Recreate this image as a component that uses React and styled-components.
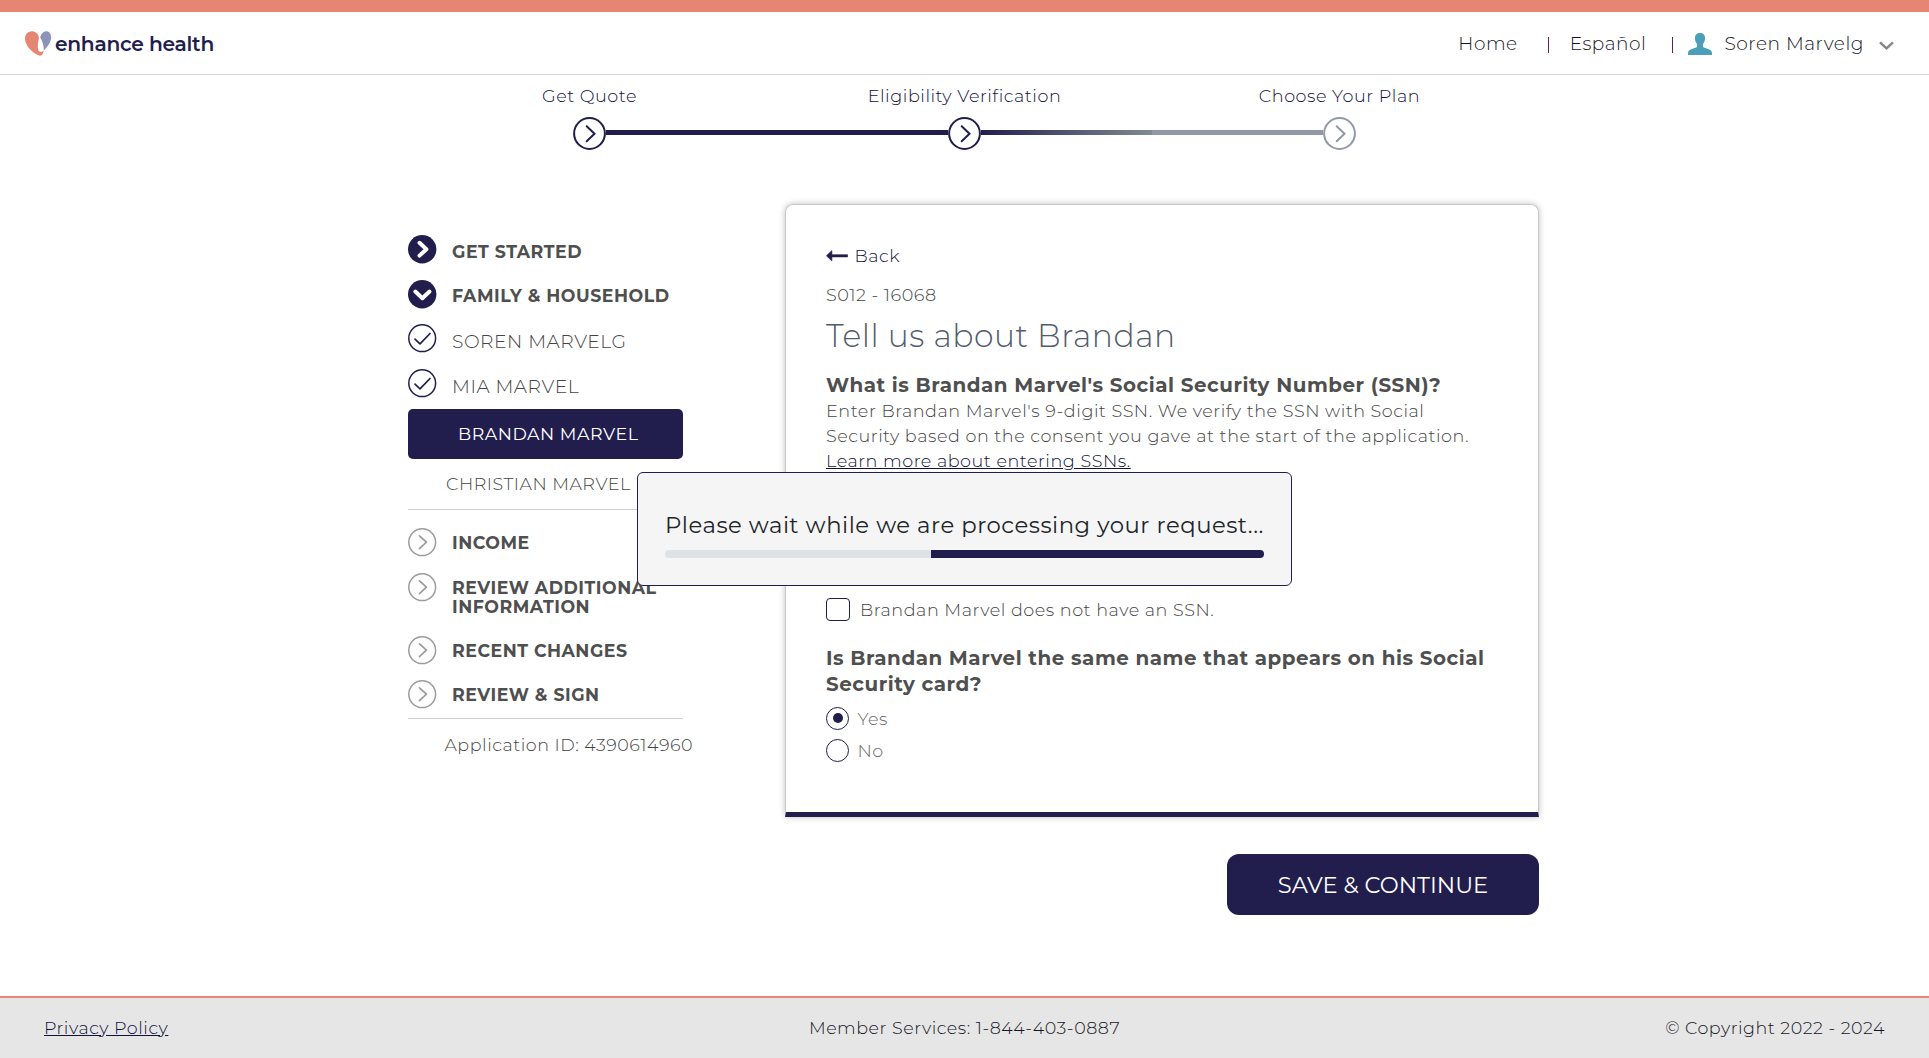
import React from 'react';
import styled, { createGlobalStyle } from 'styled-components';

const navy = '#211e4e';
const coral = '#e68672';

const GlobalStyle = createGlobalStyle`
  * { box-sizing: border-box; }
  body {
    margin: 0;
    background: #fff;
    color: #454545;
    font-family: Montserrat, Inter, sans-serif;
    font-size: 17.6px;
    font-weight: 300;
    letter-spacing: 0.528px;
  }
  a { color: inherit; text-decoration: none; }
  h1, p { margin: 0; }
`;

const Page = styled.div`
  display: flex;
  flex-direction: column;
  height: 1058px;
  overflow: hidden;
`;

const Header = styled.header`
  display: flex;
  justify-content: space-between;
  align-items: center;
  height: 75px;
  padding: 0 35px 0 25px;
  border-top: 12px solid ${coral};
  border-bottom: 1px solid #d6d6d6;
`;

const Logo = styled.div`
  display: flex;
  align-items: center;
  gap: 3px;
`;

const LogoName = styled.span`
  padding-top: 1px;
  color: ${navy};
  font-size: 20.2px;
  font-weight: 600;
  letter-spacing: -0.26px;
`;

const Nav = styled.nav`
  display: flex;
  align-items: center;
  color: #15151f;
  font-size: 18.5px;
`;

const Divider = styled.span`
  width: 1px;
  height: 16px;
  margin: 3px ${p => p.$right}px 0 ${p => p.$left}px;
  background: #5b2350;
`;

const UserName = styled.span`
  margin: 0 15px 0 12px;
  font-size: 18.6px;
`;

const Progress = styled.section`
  padding-top: 9px;
`;

const StepLabels = styled.div`
  display: grid;
  grid-template-columns: repeat(3, 375px);
  justify-content: center;
  color: #12103c;
  line-height: 24px;
  text-align: center;
`;

const Track = styled.div`
  display: flex;
  justify-content: center;
  align-items: center;
  margin-top: 9px;
  svg { display: block; }
`;

const Segment = styled.div`
  width: 342px;
  height: 5px;
  margin-bottom: 2px;
  background: ${p => (p.$partial
    ? `linear-gradient(90deg, ${navy}, #808b91) 0 0 / 50% 100% no-repeat #9099a5`
    : navy)};
`;

const Main = styled.main`
  display: flex;
  gap: 102px;
  padding: 54px 0 0 408px;
`;

const Sidebar = styled.aside`
  width: 275px;
  padding-top: 31px;
`;

const NavRow = styled.div`
  display: flex;
  gap: 15px;
  height: ${p => p.$height}px;
  svg { flex: none; display: block; }
`;

const NavLabel = styled.span`
  padding-top: ${p => p.$drop}px;
  line-height: 19px;
  color: ${p => (p.$person ? 'inherit' : '#4f4f4f')};
  font-size: ${p => (p.$person ? 18.7 : 17.35)}px;
  font-weight: ${p => (p.$person ? 300 : 700)};
`;

const ActivePerson = styled.div`
  height: 50px;
  padding-left: 50px;
  border-radius: 5px;
  background: ${navy};
  color: #fff;
  font-size: 17.4px;
  font-weight: 400;
  line-height: 50px;
`;

const NextPerson = styled.div`
  padding-left: 38px;
  font-size: 17.5px;
  line-height: 50px;
`;

const Rule = styled.div`
  height: 1px;
  margin-bottom: ${p => p.$gap}px;
  background: #cfcfcf;
`;

const ApplicationId = styled.p`
  padding-left: 36.5px;
  font-size: 17.5px;
  line-height: 24px;
  white-space: nowrap;
`;

const Column = styled.div`
  display: flex;
  flex-direction: column;
  align-items: flex-end;
`;

const Card = styled.section`
  width: 754px;
  height: 613px;
  padding: 39px 40px 0;
  border: 1px solid #c8c8c8;
  border-bottom: 5px solid ${navy};
  border-radius: 8px 8px 0 0;
  box-shadow: 0 0 6px rgba(0, 0, 0, 0.25);
`;

const BackLink = styled.a`
  display: flex;
  align-items: center;
  gap: 6.5px;
  color: #12103c;
  line-height: 24px;
`;

const ScreenCode = styled.p`
  margin-top: 15px;
  line-height: 24px;
`;

const Title = styled.h1`
  margin-top: 9px;
  color: #525b6b;
  font-size: 31.4px;
  font-weight: 300;
  line-height: 40px;
`;

const Question = styled.p`
  margin-top: ${p => p.$top}px;
  color: #4f4f4f;
  font-size: 19.88px;
  font-weight: 700;
  line-height: 26px;
`;

const Hint = styled.p`
  line-height: 25px;
  a {
    color: #12103c;
    text-decoration: underline;
  }
`;

const Choice = styled.label`
  display: flex;
  align-items: center;
  gap: ${p => p.$gap}px;
  height: 23px;
  margin-top: ${p => p.$top}px;
  color: ${p => p.$color || 'inherit'};
`;

const CheckBox = styled.span`
  width: 24px;
  height: 23px;
  border: 1px solid ${navy};
  border-radius: 4px;
`;

const Radio = styled.span`
  display: grid;
  place-items: center;
  width: 23px;
  height: 23px;
  border: 1px solid ${navy};
  border-radius: 50%;
  &::after {
    content: '';
    width: 10px;
    height: 10px;
    border-radius: 50%;
    background: ${p => (p.$checked ? navy : 'transparent')};
  }
`;

const SaveButton = styled.button`
  width: 312px;
  height: 61px;
  margin-top: 37px;
  padding: 0;
  border: 0;
  border-radius: 12px;
  background: ${navy};
  color: #fff;
  font-family: inherit;
  font-size: 22.6px;
  font-weight: 400;
  letter-spacing: 0;
`;

const Footer = styled.footer`
  display: grid;
  grid-template-columns: 1fr auto 1fr;
  align-items: center;
  height: 62px;
  margin-top: auto;
  padding: 0 43px 2px;
  border-top: 2px solid ${coral};
  background: #e6e6e6;
  color: #15151f;
  font-size: 17.5px;
`;

const PrivacyLink = styled.a`
  justify-self: start;
  padding-left: 1px;
  color: #12103c;
  text-decoration: underline;
`;

const Copyright = styled.span`
  justify-self: end;
  padding-right: 1px;
`;

const Overlay = styled.div`
  position: fixed;
  inset: 0;
  display: flex;
  align-items: center;
  justify-content: center;
`;

const Dialog = styled.div`
  width: 655px;
  height: 114px;
  padding: 38px 27px 0;
  border: 1px solid ${navy};
  border-radius: 6px;
  background: #f5f5f5;
  color: #212529;
  font-size: 22.77px;
  font-weight: 400;
  line-height: 28px;
  white-space: nowrap;
`;

const Bar = styled.div`
  display: flex;
  justify-content: flex-end;
  height: 8px;
  margin-top: 11px;
  border-radius: 4px;
  overflow: hidden;
  background: #dee2e6;
`;

const BarFill = styled.div`
  width: 333px;
  background: ${navy};
`;

const HeartMark = () => (
  <svg width="27" height="25" viewBox="0 0 27 25">
    <path fill={coral} d="M14 7C13.4 2.3 9.6 0 5.8.4 2 .8 0 4 0 8c.4 7 8 15 15 16.7 2.500.100 3.500-2.700 3.600-5.200-1.100 1.500-3.100 1.900-4.600.700C12.300 18.500 12.600 12 14 7Z" />
    <path fill="#8c92b8" d="M15.200 6.500C16 3 18.500 0 21.500.2 25 .5 26.500 4 26 8c-1 5-4 8-7.200 11.500C19 15 17.500 10 15.200 6.500Z" />
  </svg>
);

const PersonIcon = () => (
  <svg width="24" height="22" viewBox="0 0 24 22">
    <path fill="#4b9fb9" d="M12 0c3 0 5 1.500 5 5 0 3-.7 4.500-2 6v3c2 1.500 9 1.800 9 6v2H0v-2c0-4.200 7-4.500 9-6v-3C7.700 9.500 7 8 7 5c0-3.500 2-5 5-5Z" />
  </svg>
);

const ChevronDown = () => (
  <svg width="15" height="9" viewBox="0 0 15 9" fill="none" stroke="#858585" strokeWidth="2.400">
    <path d="M1 1.300 7.500 7.300 14 1.300" />
  </svg>
);

const ShiftedIcon = styled.span`
  display: flex;
  padding-top: ${p => p.$top}px;
`;

const StepIcon = ({ color }) => (
  <svg width="33" height="33" viewBox="0 0 33 33" fill="none" stroke={color} strokeWidth="2" strokeLinecap="round">
    <circle cx="16.500" cy="16.500" r="15.400" />
    <path d="M13.700 9.200 21.500 16.700 13.700 24.200" />
  </svg>
);

const glyphs = {
  right: 'M11.500 7.800 18.400 14.200 11.500 20.600',
  down: 'M7.300 11.500 14.400 18.200 21.500 11.500',
  check: 'M7 15.200 12 19.800 22 9.500',
};

const NavIcon = ({ glyph, solid, color = navy }) => (
  <svg width="29" height="29" viewBox="0 0 29 29" fill="none" strokeLinecap="round" strokeLinejoin="round">
    <circle cx="14.200" cy="14.200" r={solid ? 14.2 : 13.4} fill={solid ? color : 'none'} stroke={solid ? 'none' : color} strokeWidth="1.500" />
    <path d={glyphs[glyph]} stroke={solid ? '#fff' : color} strokeWidth={solid ? 4 : 1.7} />
  </svg>
);

const ArrowLeft = () => (
  <svg width="22" height="12" viewBox="0 0 22 12">
    <path fill={navy} stroke={navy} strokeWidth=".6" strokeLinejoin="round" d="M.4 5.800 5.900.6V4.700H21.600V6.900H5.900V11Z" />
  </svg>
);

const household = [
  { label: 'GET STARTED', glyph: 'right', solid: true, height: 45, drop: 7 },
  { label: 'FAMILY & HOUSEHOLD', glyph: 'down', solid: true, height: 44, drop: 6 },
  { label: 'SOREN MARVELG', glyph: 'check', person: true, height: 45, drop: 8 },
  { label: 'MIA MARVEL', glyph: 'check', person: true, height: 40, drop: 8 },
];

const upcoming = [
  { label: 'INCOME', height: 45 },
  { label: 'REVIEW ADDITIONAL INFORMATION', height: 63 },
  { label: 'RECENT CHANGES', height: 44 },
  { label: 'REVIEW & SIGN', height: 38 },
];

export default function App() {
  return (
    <Page>
      <GlobalStyle />
      <Header>
        <Logo>
          <HeartMark />
          <LogoName>enhance health</LogoName>
        </Logo>
        <Nav>
          <a href="#home">Home</a>
          <Divider $left={30} $right={21} />
          <a href="#es">Español</a>
          <Divider $left={26} $right={15} />
          <ShiftedIcon $top={2}><PersonIcon /></ShiftedIcon>
          <UserName>Soren Marvelg</UserName>
          <ShiftedIcon $top={4}><ChevronDown /></ShiftedIcon>
        </Nav>
      </Header>

      <Progress>
        <StepLabels>
          <span>Get Quote</span>
          <span>Eligibility Verification</span>
          <span>Choose Your Plan</span>
        </StepLabels>
        <Track>
          <StepIcon color={navy} />
          <Segment />
          <StepIcon color={navy} />
          <Segment $partial />
          <StepIcon color="#9099a5" />
        </Track>
      </Progress>

      <Main>
        <Sidebar>
          {household.map(item => (
            <NavRow key={item.label} $height={item.height}>
              <NavIcon glyph={item.glyph} solid={item.solid} />
              <NavLabel $drop={item.drop} $person={item.person}>{item.label}</NavLabel>
            </NavRow>
          ))}
          <ActivePerson>BRANDAN MARVEL</ActivePerson>
          <NextPerson>CHRISTIAN MARVEL</NextPerson>
          <Rule $gap={18} />
          {upcoming.map(item => (
            <NavRow key={item.label} $height={item.height}>
              <NavIcon glyph="right" color="#9b9b9b" />
              <NavLabel $drop={5}>{item.label}</NavLabel>
            </NavRow>
          ))}
          <Rule $gap={14} />
          <ApplicationId>Application ID: 4390614960</ApplicationId>
        </Sidebar>

        <Column>
          <Card>
            <BackLink href="#back"><ArrowLeft />Back</BackLink>
            <ScreenCode>S012 - 16068</ScreenCode>
            <Title>Tell us about Brandan</Title>
            <Question $top={16}>What is Brandan Marvel's Social Security Number (SSN)?</Question>
            <Hint>
              Enter Brandan Marvel's 9-digit SSN. We verify the SSN with Social<br />
              Security based on the consent you gave at the start of the application.<br />
              <a href="#ssn">Learn more about entering SSNs.</a>
            </Hint>
            <Choice $top={125} $gap={10}><CheckBox />Brandan Marvel does not have an SSN.</Choice>
            <Question $top={24}>
              Is Brandan Marvel the same name that appears on his Social<br />Security card?
            </Question>
            <Choice $top={9.5} $gap={8.5} $color="#6a6a6a"><Radio $checked />Yes</Choice>
            <Choice $top={9.5} $gap={8.5} $color="#6a6a6a"><Radio />No</Choice>
          </Card>
          <SaveButton>SAVE &amp; CONTINUE</SaveButton>
        </Column>
      </Main>

      <Footer>
        <PrivacyLink href="#privacy">Privacy Policy</PrivacyLink>
        <span>Member Services: 1-844-403-0887</span>
        <Copyright>© Copyright 2022 - 2024</Copyright>
      </Footer>

      <Overlay>
        <Dialog role="alertdialog">
          Please wait while we are processing your request...
          <Bar><BarFill /></Bar>
        </Dialog>
      </Overlay>
    </Page>
  );
}
